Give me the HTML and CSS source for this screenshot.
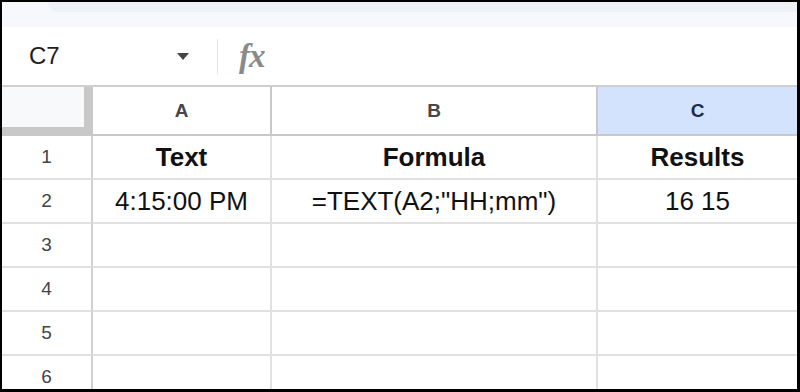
FILE: index.html
```html
<!DOCTYPE html>
<html>
<head>
  <title>Sheet - TEXT formula</title>
  <link rel="stylesheet" href="styles.css">
</head>
<body>

<div class="sheet">
  <div class="toolbar-edge">
    <div class="toolbar-pill"></div>
  </div>

  <div class="formula-bar">
    <div class="name-box">
      <span class="cell-ref">C7</span>
      <span class="caret"></span>
    </div>
    <div class="divider"></div>
    <span class="fx">fx</span>
  </div>

  <div class="grid">
    <div class="corner"></div>
    <div class="col-head">A</div>
    <div class="col-head">B</div>
    <div class="col-head selected">C</div>

    <div class="row-head">1</div>
    <div class="cell bold">Text</div>
    <div class="cell bold">Formula</div>
    <div class="cell bold last">Results</div>

    <div class="row-head">2</div>
    <div class="cell">4:15:00 PM</div>
    <div class="cell">=TEXT(A2;"HH;mm")</div>
    <div class="cell last">16 15</div>

    <div class="row-head">3</div>
    <div class="cell"></div>
    <div class="cell"></div>
    <div class="cell last"></div>

    <div class="row-head">4</div>
    <div class="cell"></div>
    <div class="cell"></div>
    <div class="cell last"></div>

    <div class="row-head">5</div>
    <div class="cell"></div>
    <div class="cell"></div>
    <div class="cell last"></div>

    <div class="row-head">6</div>
    <div class="cell"></div>
    <div class="cell"></div>
    <div class="cell last"></div>
  </div>
</div>

</body>
</html>
```

FILE: styles.css
```css
* {
  box-sizing: border-box;
}

body {
  margin: 0;
  font-family: "Liberation Sans", Arial, sans-serif;
  background-color: #fff;
}

.sheet {
  width: 800px;
  height: 392px;
  border-top: 2px solid #000;
  border-left: 2px solid #000;
  border-right: 3px solid #000;
  border-bottom: 3px solid #000;
  overflow: hidden;
  background-color: #fff;
}

/* bottom of the toolbar above the formula bar */
.toolbar-edge {
  height: 25px;
  background-color: #f6f8fb;
  padding-left: 46px;
}

.toolbar-pill {
  height: 10px;
  background-color: #eef1f6;
  border-bottom-left-radius: 10px;
}

.formula-bar {
  height: 60px;
  display: flex;
  align-items: center;
  border-bottom: 2px solid #cfcfcf;
}

.name-box {
  width: 198px;
  display: flex;
  align-items: center;
  justify-content: space-between;
  padding-left: 27px;
  padding-right: 11px;
}

.cell-ref {
  font-size: 24px;
  color: #1f1f1f;
}

.caret {
  width: 0;
  height: 0;
  border-left: 6.5px solid transparent;
  border-right: 6.5px solid transparent;
  border-top: 7px solid #444;
}

.divider {
  width: 1px;
  height: 35px;
  margin-left: 17px;
  background-color: #e6e6e6;
}

.fx {
  margin-left: 21px;
  font-family: "Liberation Serif", "DejaVu Serif", serif;
  font-style: italic;
  font-weight: bold;
  font-size: 33px;
  color: #8a8a8a;
  letter-spacing: -1px;
  line-height: 1;
}

.grid {
  display: grid;
  grid-template-columns: 91px 179px 326px 1fr;
  grid-template-rows: 49px;
  grid-auto-rows: 44px;
}

.corner {
  background-color: #f8f9fa;
  border-right: 9px solid #c8c8c8;
  border-bottom: 9px solid #c8c8c8;
}

.col-head {
  display: flex;
  align-items: center;
  justify-content: center;
  font-size: 19px;
  font-weight: bold;
  color: #474747;
  border-right: 2px solid #c8c8c8;
  border-bottom: 2px solid #c8c8c8;
}

.col-head.selected {
  background-color: #d3e3fd;
  color: #1a2b4c;
  border-right: none;
}

.row-head {
  display: flex;
  align-items: center;
  justify-content: center;
  font-size: 19px;
  color: #444;
  border-right: 2px solid #d0d0d0;
  border-bottom: 2px solid #e1e1e1;
}

.cell {
  display: flex;
  align-items: center;
  justify-content: center;
  font-size: 26px;
  color: #111;
  border-right: 2px solid #e1e1e1;
  border-bottom: 2px solid #e1e1e1;
}

.cell.last {
  border-right: none;
}

.cell.bold {
  font-weight: bold;
}
```
